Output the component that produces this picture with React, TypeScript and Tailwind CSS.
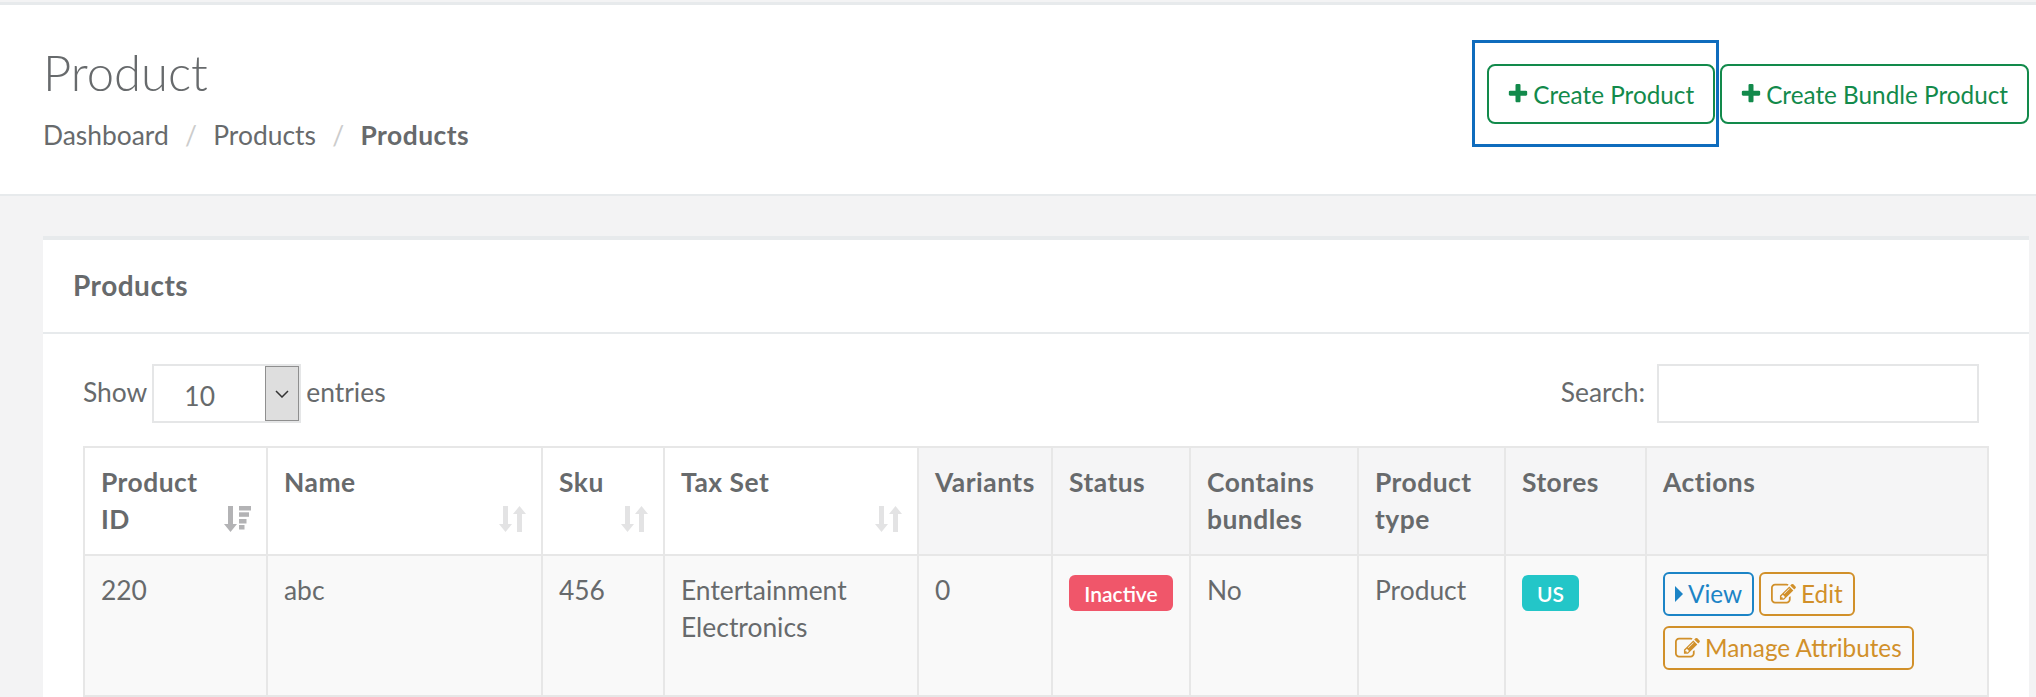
import React from 'react';

// Font Awesome 4 glyph outlines, the reference uses these rather than the FA5 set
const PLUS =
  'M1600 736v192q0 40-28 68t-68 28h-416v416q0 40-28 68t-68 28h-192q-40 0-68-28t-28-68v-416h-416q-40 0-68-28t-28-68v-192q0-40 28-68t68-28h416v-416q0-40 28-68t68-28h192q40 0 68 28t28 68v416h416q40 0 68 28t28 68z';
const EDIT =
  'M888 1184l116-116-152-152-116 116v56h96v96h56zm440-720q-16-16-33 1l-350 350q-17 17-1 33t33-1l350-350q17-17 1-33zm80 594v190q0 119-84.5 203.5t-203.5 84.5h-832q-119 0-203.5-84.5t-84.5-203.5v-832q0-119 84.5-203.5t203.5-84.5h832q63 0 117 25 15 7 18 23 3 17-9 29l-49 49q-14 14-32 8-23-6-45-6h-832q-66 0-113 47t-47 113v832q0 66 47 113t113 47h832q66 0 113-47t47-113v-126q0-13 9-22l64-64q15-15 35-7t20 29zm-96-738l288 288-672 672h-288v-288zm444 132l-92 92-288-288 92-92q28-28 68-28t68 28l152 152q28 28 28 68t-28 68z';

const SortIcon = () => (
  <svg viewBox="0 0 27 26" className="h-[26px] w-[27px] fill-[#e3e3e4]">
    <path d="M4 0h5v18h4l-6.500 8-6.500-8h4z" />
    <path d="M20.500 0l6.500 8h-4v18h-5V8h-4z" />
  </svg>
);

const SortActiveIcon = () => (
  <svg viewBox="0 0 27 26" className="h-[26px] w-[27px] fill-[#b3b3b5]">
    <path d="M4 0h5v18h4l-6.500 8-6.500-8h4z" />
    <rect x="15" y="0" width="12" height="4.500" />
    <rect x="15" y="6.300" width="10" height="4.500" />
    <rect x="15" y="13" width="7.500" height="4.500" />
    <rect x="15" y="19" width="5.500" height="4.500" />
  </svg>
);

const EditIcon = () => (
  <svg viewBox="0 0 1792 1792" className="mr-[5px] h-[25px] w-[25px] fill-current">
    <path d={EDIT} />
  </svg>
);

interface Column {
  label: React.ReactNode;
  width: string;
  sort?: 'active' | 'idle';
}

const columns: Column[] = [
  { label: <>Product<br />ID</>, width: 'w-[183px]', sort: 'active' },
  { label: 'Name', width: 'w-[275px]', sort: 'idle' },
  { label: 'Sku', width: 'w-[122px]', sort: 'idle' },
  { label: 'Tax Set', width: 'w-[254px]', sort: 'idle' },
  { label: 'Variants', width: 'w-[134px]' },
  { label: 'Status', width: 'w-[138px]' },
  { label: <>Contains<br />bundles</>, width: 'w-[168px]' },
  { label: <>Product<br />type</>, width: 'w-[147px]' },
  { label: 'Stores', width: 'w-[141px]' },
  { label: 'Actions', width: 'w-[342px]' },
];

const cell = 'border-2 border-[#e7e7e7] p-4 align-top';

const ActionButton = ({ tone, icon, children }: { tone: 'blue' | 'amber'; icon: React.ReactNode; children: string }) => (
  <a
    className={
      'inline-flex h-[44px] items-center rounded-md border-2 px-[10px] text-[24.300px] leading-none ' +
      (tone === 'blue' ? 'border-[#1c84c6] text-[#1c84c6]' : 'border-[#d1902a] text-[#d1902a]')
    }
  >
    {icon}
    {children}
  </a>
);

const CreateButton = ({ children }: { children: string }) => (
  <a className="flex h-[60px] items-center rounded-lg border-2 border-[#128a4b] px-[19px] text-[24.300px] text-[#128a4b]">
    <svg viewBox="128 128 1536 1536" className="mr-[5px] h-[20px] w-[20px] fill-current">
      <path d={PLUS} />
    </svg>
    {children}
  </a>
);

export default function App() {
  return (
    <div className="h-[697px] overflow-hidden bg-[#f3f3f4] [font-family:Lato,sans-serif] text-[26.400px] leading-[37px] text-[#676a6c]">
      <header className="mt-[2px] flex h-[194px] justify-between border-t-[3px] border-b-2 border-[#e7eaec] bg-white pr-[7px] pl-[43px]">
        <div>
          <h1 className="mt-[41px] text-[49px] leading-[53px] font-light">Product</h1>
          <nav className="mt-[18px] flex items-center">
            <span>Dashboard</span>
            <span className="px-[16.300px] text-[#ccc]">/</span>
            <span>Products</span>
            <span className="px-[16.300px] text-[#ccc]">/</span>
            <strong className="font-bold tracking-[0.5px]">Products</strong>
          </nav>
        </div>
        <div className="relative mt-[59px] flex gap-[5px] self-start">
          <div className="absolute top-[-24px] left-[-15px] h-[107px] w-[247px] border-[3px] border-[#0f6cbd]" />
          <CreateButton>Create Product</CreateButton>
          <CreateButton>Create Bundle Product</CreateButton>
        </div>
      </header>

      <section className="mt-[40px] mr-[7px] ml-[43px] border-t-4 border-[#e7eaec] bg-white">
        <h2 className="flex h-[94px] items-center border-b-2 border-[#e7eaec] px-[30px] pb-[2px] text-[28px] font-bold tracking-[0.5px]">Products</h2>
        <div className="px-[40px] pt-[30px]">
          <div className="flex h-[59px] items-center justify-between">
            <div className="flex items-center gap-[5px]">
              <span className="pb-[2px]">Show</span>
              <div className="flex h-[59px] w-[149px] items-stretch border-2 border-[#e5e6e7] bg-white">
                <span className="flex-1 pt-[12px] pl-[30px]">10</span>
                <span className="flex w-[34px] items-center justify-center border border-[#8f8f8f] bg-[#dedede]">
                  <svg viewBox="0 0 14 8" className="h-[8px] w-[14px] fill-none stroke-[#333] stroke-[1.500]">
                    <path d="M1 1l6 6 6-6" />
                  </svg>
                </span>
              </div>
              <span className="pb-[2px]">entries</span>
            </div>
            <div className="mr-[10px] flex items-center gap-[12px]">
              <span className="pb-[2px]">Search:</span>
              <div className="h-[59px] w-[322px] border-2 border-[#e5e6e7] bg-white" />
            </div>
          </div>

          <table className="mt-[23px] w-[1904px] table-fixed border-collapse">
            <colgroup>
              {columns.map((col, i) => (
                <col key={i} className={col.width} />
              ))}
            </colgroup>
            <thead>
              <tr>
                {columns.map((col, i) => (
                  <th key={i} className={cell + ' relative h-[108px] text-left font-bold tracking-[0.5px] ' + (col.sort ? 'bg-white' : 'bg-[#f5f5f6]')}>
                    {col.label}
                    {col.sort && (
                      <span className="absolute right-[15px] bottom-[22px]">
                        {col.sort === 'active' ? <SortActiveIcon /> : <SortIcon />}
                      </span>
                    )}
                  </th>
                ))}
              </tr>
            </thead>
            <tbody>
              <tr className="h-[141px] bg-[#f9f9f9]">
                <td className={cell}>220</td>
                <td className={cell}>abc</td>
                <td className={cell}>456</td>
                <td className={cell}>Entertainment Electronics</td>
                <td className={cell}>0</td>
                <td className={cell}>
                  <span className="mt-[3px] flex h-[36px] w-[104px] items-center justify-center rounded-md bg-[#f0566a] text-[21px] font-semibold text-white">
                    Inactive
                  </span>
                </td>
                <td className={cell}>No</td>
                <td className={cell}>Product</td>
                <td className={cell}>
                  <span className="mt-[3px] flex h-[36px] w-[57px] items-center justify-center rounded-md bg-[#23c6c8] text-[21px] font-semibold text-white">
                    US
                  </span>
                </td>
                <td className={cell}>
                  <div className="flex flex-wrap gap-x-[5px] gap-y-[10px]">
                    <ActionButton
                      tone="blue"
                      icon={
                        <svg viewBox="0 0 8 16" className="mr-[5px] h-[16px] w-[8px] fill-current">
                          <path d="M0 0l8 8-8 8z" />
                        </svg>
                      }
                    >
                      View
                    </ActionButton>
                    <ActionButton tone="amber" icon={<EditIcon />}>Edit</ActionButton>
                    <ActionButton tone="amber" icon={<EditIcon />}>Manage Attributes</ActionButton>
                  </div>
                </td>
              </tr>
            </tbody>
          </table>
        </div>
      </section>
    </div>
  );
}
